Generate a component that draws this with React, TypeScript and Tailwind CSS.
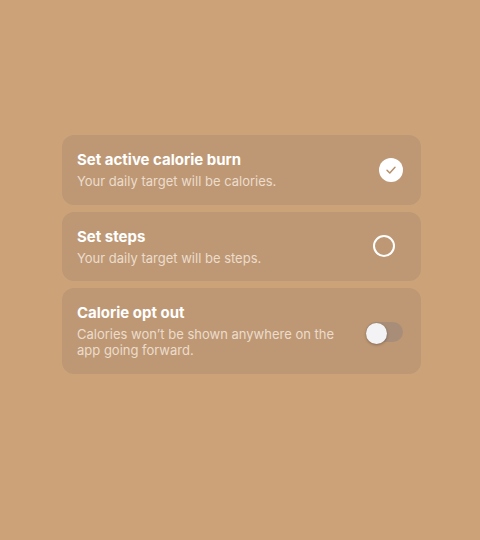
import React from "react";

function Card({ title, subtitle, right, rightClass }: { title: string; subtitle: React.ReactNode; right: React.ReactNode; rightClass: string }) {
  return (
    <div className="flex items-center rounded-[12px] bg-[#be9874] pl-[15px] pt-[15px] pb-[15.5px]">
      <div className="flex-1 min-w-0">
        <div className="text-[15px] leading-[20px] font-bold text-white">{title}</div>
        <div className="mt-[3px] text-[13px] leading-[16px] text-[#ecdccc]">{subtitle}</div>
      </div>
      <div className={rightClass}>{right}</div>
    </div>
  );
}

export default function App() {
  return (
    <div className="min-h-[540px] w-[480px] bg-[#cca379] pt-[135px]" style={{ fontFamily: "Inter, 'Noto Sans', sans-serif" }}>
      <div className="ml-[62px] flex w-[359px] flex-col gap-[7px]">
        <Card
          title="Set active calorie burn"
          subtitle="Your daily target will be calories."
          rightClass="mr-[18px] ml-2"
          right={
            <div className="flex h-[24px] w-[24px] items-center justify-center rounded-full bg-white">
              <svg width="12" height="12" viewBox="0 0 12 12" fill="none">
                <path d="M2 6.3 L4.8 9 L10 3.2" stroke="#b8916b" strokeWidth="1.5" strokeLinecap="round" strokeLinejoin="round" />
              </svg>
            </div>
          }
        />
        <Card
          title="Set steps"
          subtitle="Your daily target will be steps."
          rightClass="mr-[26px] ml-2"
          right={<div className="h-[22px] w-[22px] rounded-full border-2 border-white" />}
        />
        <Card
          title="Calorie opt out"
          subtitle={<>Calories won’t be shown anywhere on the<br />app going forward.</>}
          rightClass="mr-[18px] ml-2 mt-[3px]"
          right={
            <div className="relative h-[20px] w-[37px] rounded-full bg-[#a88e78]">
              <div className="absolute left-0 top-[1px] h-[21px] w-[21px] rounded-full bg-[#f3f3f5] shadow-[0_1px_3px_rgba(0,0,0,0.3)]" />
            </div>
          }
        />
      </div>
    </div>
  );
}
